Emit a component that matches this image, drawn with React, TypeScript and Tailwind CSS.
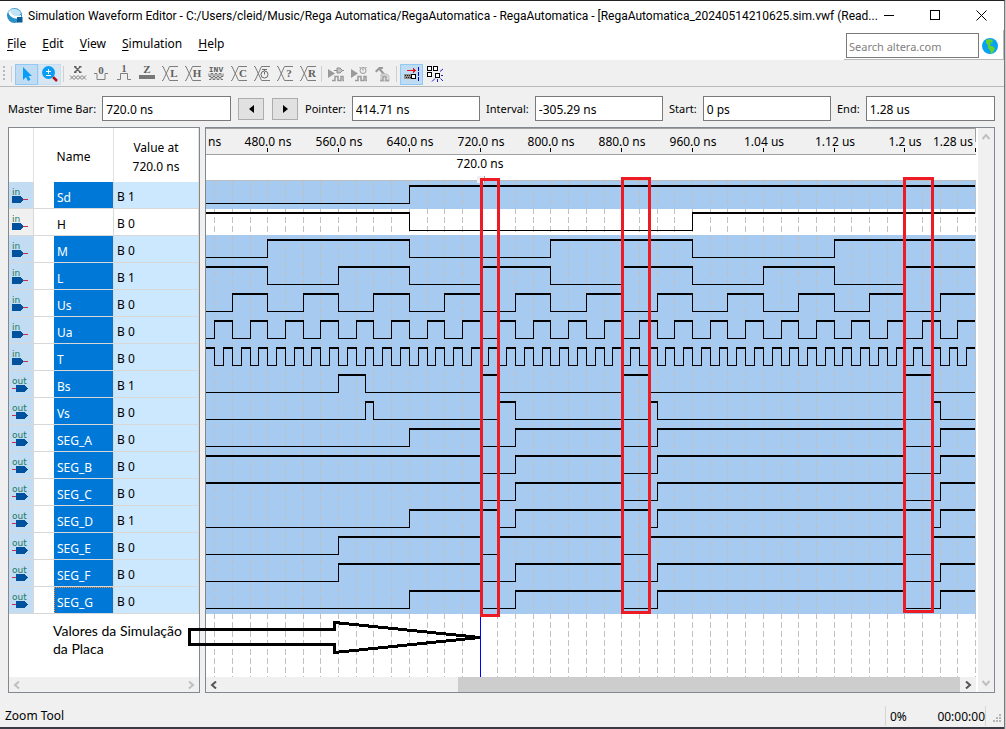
import type { ReactNode } from "react";

type Signal = {
  name: string;
  kind: "in" | "out";
  value: string;
  selected: boolean;
  start: 0 | 1;
  edges: number[];
};

const T_START = 411;
const T_END = 1280;

function clock(step: number): number[] {
  const edges: number[] = [];
  for (let t = Math.ceil(T_START / step) * step; t < T_END; t += step) edges.push(t);
  return edges;
}

const COMMON = [720, 760, 880, 920, 1200, 1240];

const SIGNALS: Signal[] = [
  { name: "Sd", kind: "in", value: "B 1", selected: true, start: 0, edges: [640] },
  { name: "H", kind: "in", value: "B 0", selected: false, start: 1, edges: [640, 960] },
  { name: "M", kind: "in", value: "B 0", selected: true, start: 0, edges: [480, 640, 800, 960, 1120] },
  { name: "L", kind: "in", value: "B 1", selected: true, start: 1, edges: [480, 560, 640, 720, 800, 880, 960, 1040, 1120, 1200] },
  { name: "Us", kind: "in", value: "B 0", selected: true, start: 0, edges: clock(40) },
  { name: "Ua", kind: "in", value: "B 0", selected: true, start: 0, edges: clock(20) },
  { name: "T", kind: "in", value: "B 0", selected: true, start: 1, edges: clock(10) },
  { name: "Bs", kind: "out", value: "B 1", selected: true, start: 0, edges: [560, 590, 720, 740, 880, 910, 1200, 1230] },
  { name: "Vs", kind: "out", value: "B 0", selected: true, start: 0, edges: [590, 600, 740, 760, 910, 920, 1230, 1240] },
  { name: "SEG_A", kind: "out", value: "B 0", selected: true, start: 0, edges: [640, ...COMMON] },
  { name: "SEG_B", kind: "out", value: "B 0", selected: true, start: 1, edges: COMMON },
  { name: "SEG_C", kind: "out", value: "B 0", selected: true, start: 1, edges: COMMON },
  { name: "SEG_D", kind: "out", value: "B 1", selected: true, start: 0, edges: [640, 740, 760, 910, 920, 1230, 1240] },
  { name: "SEG_E", kind: "out", value: "B 0", selected: true, start: 0, edges: [560, 720, 740, 880, 910, 1200, 1230] },
  { name: "SEG_F", kind: "out", value: "B 0", selected: true, start: 0, edges: [560, ...COMMON] },
  { name: "SEG_G", kind: "out", value: "B 0", selected: true, start: 0, edges: [640, ...COMMON] },
];

const ROW = 27;
const ROWS_TOP = 53;
const xOf = (t: number) => Math.round(t * 0.885 - 363.6);

function Wave({ signal, index }: { signal: Signal; index: number }) {
  const high = ROWS_TOP + 4 + index * ROW;
  const low = high + 18;
  const points = [...signal.edges.map(xOf), 769];
  const parts: ReactNode[] = [];
  let level = signal.start;
  let x = 0;
  points.forEach((next, i) => {
    parts.push(
      level ? (
        <rect key={`h${i}`} x={x} y={high} width={next - x} height={2} />
      ) : (
        <rect key={`l${i}`} x={x} y={low} width={next - x} height={1} />
      ),
    );
    if (i < points.length - 1) parts.push(<rect key={`v${i}`} x={next} y={high} width={1} height={19} />);
    x = next;
    level = level ? 0 : 1;
  });
  return <g fill="#000">{parts}</g>;
}

const TICKS: [number, string][] = [
  [480, "480.0 ns"],
  [560, "560.0 ns"],
  [640, "640.0 ns"],
  [720, "720.0 ns"],
  [800, "800.0 ns"],
  [880, "880.0 ns"],
  [960, "960.0 ns"],
  [1040, "1.04 us"],
  [1120, "1.12 us"],
  [1200, "1.2 us"],
];

function Chart() {
  return (
    <svg width="770" height="549" viewBox="0 0 770 549" className="block shrink-0" shapeRendering="crispEdges" role="img" aria-label="Waveforms">
      <rect width="770" height="549" fill="#fff" />
      <rect width="770" height="26" fill="#f0f0f0" />
      <rect width="770" height="1" fill="#a0a0a0" />
      <rect y="26" width="770" height="1" fill="#a0a0a0" />
      <rect x="769" width="1" height="14" fill="#a0a0a0" />
      <rect y="52" width="770" height="1" fill="#bdbdbd" />
      <rect y="53" width="770" height="28" fill="#a6caf0" />
      <rect y="107" width="770" height="379" fill="#a6caf0" />
      {clock(20).concat(1280).map((t) => (
        <line key={t} x1={xOf(t) + 0.5} x2={xOf(t) + 0.5} y1="53" y2="549" stroke="#c0c0c0" strokeDasharray="6 3" />
      ))}
      {SIGNALS.map((s, i) => (
        <Wave key={s.name} signal={s} index={i} />
      ))}
      <g className="text-xs" fill="#000" textAnchor="middle">
        <text x="2" y="18" textAnchor="start">ns</text>
        {TICKS.map(([t, label]) => (
          <g key={t}>
            <text x={xOf(t) + 1} y="18">{label}</text>
            <rect x={xOf(t)} y="20" width="1" height="4" />
          </g>
        ))}
        <text x="767" y="18" textAnchor="end">1.28 us</text>
        <rect x="769" y="20" width="1" height="4" />
        <text x="274" y="40">720.0 ns</text>
      </g>
      <rect x="271" y="48" width="8" height="7" fill="#f0f0f0" />
      <rect x="278" y="48" width="1" height="7" fill="#a0a0a0" />
      <rect x="274" y="55" width="1" height="494" fill="#00f" />
    </svg>
  );
}

function PinIcon({ kind }: { kind: "in" | "out" }) {
  return (
    <svg width="24" height="26" viewBox="0 0 24 26" className="block" aria-label={kind}>
      <text x="3" y="13" fontSize="9" fontFamily="DejaVu Sans" fill="#1c7a62">{kind}</text>
      {kind === "in" ? (
        <g shapeRendering="crispEdges">
          <path d="M3 14h9l3 3.5-3 3.5H3z" fill="#00529f" />
          <rect x="14" y="17" width="5" height="1" fill="#c2304f" />
        </g>
      ) : (
        <g shapeRendering="crispEdges">
          <path d="M7 14h9l3 3.5-3 3.5H7z" fill="#00529f" />
          <rect x="3" y="17" width="4" height="1" fill="#c2304f" />
        </g>
      )}
    </svg>
  );
}

function Tool({ label, tone = "plain", children }: { label: string; tone?: "plain" | "on" | "hover"; children: ReactNode }) {
  const look = {
    plain: "border-transparent",
    on: "border-[#90c8f6] bg-[#c0dcf3]",
    hover: "border-[#c5dff5] bg-[#d8e6f2]",
  }[tone];
  return (
    <button type="button" aria-label={label} className={`flex h-[21px] w-[23px] items-center justify-center border ${look}`}>
      <svg width="16" height="16" viewBox="0 0 16 16" className="block shrink-0 overflow-visible">{children}</svg>
    </button>
  );
}

function Glyph({ x = 8, y, size, children }: { x?: number; y: number; size: number; children: string }) {
  return (
    <text x={x} y={y} fontSize={size} fontWeight="700" fontFamily="Liberation Serif" textAnchor="middle" fill="#5f5f5f">
      {children}
    </text>
  );
}

function Cross({ letter }: { letter?: string }) {
  return (
    <>
      <path d="M0 .5h1L7.500 14.500H16M0 14.500h1L7.500 .5H16" fill="none" stroke="#7d7d7d" />
      {letter && <Glyph x={12} y={11} size={11}>{letter}</Glyph>}
    </>
  );
}

function Play() {
  return (
    <>
      <path d="M0 3l7 4.500L0 12z" fill="#9a9a9a" />
      <path d="M4 14.500h3v-4h3v4h3v-4h2v4h1" fill="none" stroke="#9a9a9a" strokeWidth="1.500" />
    </>
  );
}

function Separator() {
  return <span className="mx-[2px] h-4 w-px bg-[#cfcfcf]" />;
}

function Toolbar() {
  return (
    <div role="toolbar" aria-label="Waveform tools" className="flex h-[25px] items-center border-b border-[#b9b9b9] bg-[#f0f0f0] pl-[3px]">
      <svg width="8" height="18" viewBox="0 0 8 18" className="block" fill="#b8b8b8" aria-hidden="true">
        <path d="M0 1h2v2H0zM0 5h2v2H0zM0 9h2v2H0zM0 13h2v2H0z" />
      </svg>
      <span className="mr-[3px] h-4 w-px bg-[#cfcfcf]" />
      <Tool label="Selection Tool" tone="on">
        <path d="M4 1v13l3-3 2 4 2.500-1.200L9.500 10H13z" fill="#0a9df5" />
      </Tool>
      <Tool label="Zoom Tool" tone="hover">
        <path d="M11 11l4 4" stroke="#b3131b" strokeWidth="2.500" />
        <circle cx="6.500" cy="6.500" r="6.500" fill="#0a9df5" />
        <path d="M4 5.500h5M6.500 3v5M4 9.500h5" stroke="#fff" fill="none" />
      </Tool>
      <Separator />
      <Tool label="Forcing Unknown">
        <path d="M5 1l5 5M10 1L5 6M4 .7h2.500M9 .7h2.500M4 6.300h2.500M9 6.300h2.500" stroke="#5f5f5f" strokeWidth="1.400" fill="none" />
        <path d="M0 9.500l4 4 4-4 4 4 4-4M0 13.500l4-4 4 4 4-4 4 4" stroke="#808080" fill="none" />
      </Tool>
      <Tool label="Forcing Low">
        <Glyph y={8} size={11}>0</Glyph>
        <path d="M1 7.500h3v6h8v-6h3" fill="none" stroke="#808080" />
      </Tool>
      <Tool label="Forcing High">
        <Glyph y={6} size={10}>1</Glyph>
        <path d="M1 13.500h3.500v-6h7v6H15" fill="none" stroke="#808080" />
      </Tool>
      <Tool label="High Impedance">
        <Glyph y={7} size={11}>Z</Glyph>
        <rect y="9" width="16" height="4" fill="#777" />
      </Tool>
      <Tool label="Weak Low"><Cross letter="L" /></Tool>
      <Tool label="Weak High"><Cross letter="H" /></Tool>
      <Tool label="Invert">
        <text x="8" y="6" fontSize="8" fontWeight="700" fontFamily="Liberation Mono" textAnchor="middle" fill="#5f5f5f">INV</text>
        <path d="M1 7.500v3h2v-3h2v3h2v-3h2v3h2v-3h2v3h2v-3M1 13.500h2v-2h2v2h2v-2h2v2h2v-2h2v2h2" fill="none" stroke="#777" />
      </Tool>
      <Tool label="Count Value"><Cross letter="C" /></Tool>
      <Tool label="Overwrite Clock">
        <Cross />
        <circle cx="10.500" cy="8.500" r="3.500" fill="#f0f0f0" stroke="#6b6b6b" />
        <path d="M10.500 8.500V6M8 3.500h5M10.500 3v2" stroke="#6b6b6b" fill="none" />
      </Tool>
      <Tool label="Arbitrary Value"><Cross letter="?" /></Tool>
      <Tool label="Random Values"><Cross letter="R" /></Tool>
      <Separator />
      <Tool label="Run Functional Simulation">
        <Play />
        <path d="M6 4.500h3M14 4.500h2M9 2h3l2.500 2.500L12 7H9z" fill="#c4c4c4" stroke="#8a8a8a" />
      </Tool>
      <Tool label="Run Timing Simulation">
        <Play />
        <circle cx="12" cy="4.500" r="3" fill="#eee" stroke="#9a9a9a" />
        <path d="M12 4.500V2.500M8.500 1l1 1M15.500 1l-1 1" stroke="#8a8a8a" />
      </Tool>
      <Tool label="Generate Testbench">
        <path d="M1 5l4-4h4v2H7l5 6-1.500 1.500L5 4 2.500 6.500z" fill="#9a9a9a" />
        <path d="M7 8h6l2 2v5H7z" fill="#ddd" stroke="#c0c0c0" />
        <path d="M6 14.500h3v-4h3v4h3" fill="none" stroke="#a2a2a2" strokeWidth="1.500" />
      </Tool>
      <span className="mx-[3px] h-4 w-px bg-[#cfcfcf]" />
      <Tool label="Snap to Grid" tone="on">
        <g shapeRendering="crispEdges">
          <path d="M3 4h6V2l3 2.500L9 7V5H3z" fill="#e8141c" />
          <rect x="0" y="8" width="8" height="5" fill="#8f8f8f" />
          <path d="M1 9h1v1H1zM3 9h1v1H3zM5 9h1v1H5zM2 11h1v1H2zM4 11h1v1H4zM6 11h1v1H6z" fill="#222" />
          <rect x="7.500" y="8.500" width="4" height="4" fill="#fff" stroke="#000" />
          <path d="M14.500 1v14" stroke="#00d" strokeDasharray="4 1" />
        </g>
      </Tool>
      <Tool label="Snap to Transition">
        <g shapeRendering="crispEdges" fill="#fff" stroke="#000">
          <rect x=".5" y=".5" width="4" height="4" />
          <rect x="6.500" y=".5" width="4" height="4" />
          <rect x=".5" y="6.500" width="4" height="4" />
          <rect x="8.500" y="7.500" width="4" height="4" />
        </g>
        <path d="M13 5.500l3-2.500M14 9.500h2M13.500 12.500L16 15M10.500 13v3M8 12.500l-3 3" stroke="#2020c8" />
      </Tool>
    </div>
  );
}

function Field({ id, label, value }: { id: string; label: string; value: string }) {
  return (
    <div className="flex min-w-0 flex-1 items-center gap-[6px]">
      <label htmlFor={id} className="shrink-0 pt-[2px] text-[11px]">{label}</label>
      <input id={id} defaultValue={value} className="h-[25px] w-full min-w-0 flex-1 border border-[#7a7a7a] bg-white px-[3px] pt-[2px] outline-none" />
    </div>
  );
}

function TimeBar() {
  return (
    <form className="flex h-10 items-center pt-[3px] pr-[9px] pl-2">
      <div className="flex min-w-0 flex-[223] items-center">
        <Field id="master" label="Master Time Bar:" value="720.0 ns" />
      </div>
      <button type="button" aria-label="Previous transition" className="ml-[7px] flex h-[22px] w-[26px] items-center justify-center border border-[#adadad] bg-[#e1e1e1]">
        <svg width="5" height="8" viewBox="0 0 5 8"><path d="M5 0v8L0 4z" /></svg>
      </button>
      <button type="button" aria-label="Next transition" className="ml-2 flex h-[22px] w-[26px] items-center justify-center border border-[#adadad] bg-[#e1e1e1]">
        <svg width="5" height="8" viewBox="0 0 5 8"><path d="M0 0v8l5-4z" /></svg>
      </button>
      <div className="ml-[7px] flex min-w-0 flex-[175]"><Field id="pointer" label="Pointer:" value="414.71 ns" /></div>
      <div className="ml-[6px] flex min-w-0 flex-[177]"><Field id="interval" label="Interval:" value="-305.29 ns" /></div>
      <div className="ml-[6px] flex min-w-0 flex-[162]"><Field id="start" label="Start:" value="0 ps" /></div>
      <div className="ml-[6px] flex min-w-0 flex-[158]"><Field id="end" label="End:" value="1.28 us" /></div>
    </form>
  );
}

function Chevron({ d, tone }: { d: string; tone: string }) {
  return (
    <svg width="8" height="8" viewBox="0 0 8 8" className="block" aria-hidden="true">
      <path d={d} fill="none" stroke={tone} strokeWidth="2" />
    </svg>
  );
}

const LEFT = "M6 .5L2 4l4 3.500";
const RIGHT = "M2 .5L6 4 2 7.500";
const UP = "M.5 6L4 2l3.500 4";
const DOWN = "M.5 2L4 6l3.500-4";

function SignalPanel() {
  return (
    <section className="flex w-48 shrink-0 flex-col border border-[#828790] bg-white">
      <table className="w-full table-fixed border-separate border-spacing-0">
        <colgroup>
          <col className="w-[25px]" />
          <col className="w-[20px]" />
          <col className="w-[60px]" />
          <col className="w-[85px]" />
        </colgroup>
        <thead>
          <tr className="h-[54px]">
            <th aria-label="Type" className="border-r border-[#e2e2e2] p-0" />
            <th colSpan={2} className="border-r border-[#e2e2e2] p-0 pt-1 font-normal">Name</th>
            <th className="border-r border-[#e2e2e2] p-0 pt-1 leading-[19px] font-normal">Value at<br />720.0 ns</th>
          </tr>
        </thead>
        <tbody>
          {SIGNALS.map((s) => (
            <tr key={s.name} className="h-[27px]">
              <td className={`border-r border-b border-[#d8d8d8] p-0 ${s.selected ? "bg-[#c2dcf3]" : "bg-[#f0f0f0]"}`}><PinIcon kind={s.kind} /></td>
              <td className="border-b border-[#d8d8d8] p-0" />
              <td className={`border-r border-b border-[#d8d8d8] p-0 ${s.selected ? "bg-[#0078d7] text-white" : ""}`}>
                <div className={`flex h-[26px] items-center border-t border-l border-dotted pt-1 pl-[2px] ${s.name === "SEG_G" ? "border-[#ff8728]" : "border-transparent"}`}>{s.name}</div>
              </td>
              <td className={`border-r border-b border-[#d8d8d8] p-0 pt-1 pl-[3px] ${s.selected ? "bg-[#cce8ff]" : ""}`}>{s.value}</td>
            </tr>
          ))}
        </tbody>
      </table>
      <p className="mt-2 pl-11 font-[Lato] text-sm leading-[18px] whitespace-nowrap">
        Valores da Simulação
        <br />
        da Placa
      </p>
      <div className="mt-auto flex h-[15px] items-center justify-between bg-[#f0f0f0] px-1">
        <Chevron d={LEFT} tone="#bfbfbf" />
        <Chevron d={RIGHT} tone="#bfbfbf" />
      </div>
    </section>
  );
}

function WavePanel() {
  return (
    <section className="flex min-w-0 flex-1 border border-[#828790] bg-white">
      <div className="flex min-w-0 flex-1 flex-col pr-[2px]">
        <div className="flex-1 overflow-hidden"><Chart /></div>
        <div className="flex h-[15px] bg-[#f0f0f0]">
          <div className="flex w-4 items-center justify-center"><Chevron d={LEFT} tone="#555" /></div>
          <div className="flex flex-1"><span className="ml-auto h-full w-[68%] bg-[#cdcdcd]" /></div>
          <div className="flex w-4 items-center justify-center"><Chevron d={RIGHT} tone="#555" /></div>
        </div>
      </div>
      <div className="flex w-4 flex-col items-center justify-between bg-[#f0f0f0] py-[5px]">
        <Chevron d={UP} tone="#bfbfbf" />
        <Chevron d={DOWN} tone="#bfbfbf" />
      </div>
    </section>
  );
}

function Annotations() {
  return (
    <svg width="987" height="566" viewBox="0 0 987 566" fill="none" strokeWidth="3" className="pointer-events-none absolute top-0 left-0" aria-hidden="true">
      <g stroke="#ed1c24" shapeRendering="crispEdges">
        <rect x="473.500" y="52.500" width="17" height="436" />
        <rect x="614.500" y="51.500" width="27" height="434" />
        <rect x="896.500" y="51.500" width="28" height="433" />
      </g>
      <path d="M181.500 502.500h145v-7L472 510.500 326.500 525.500v-8h-145z" stroke="#000" shapeRendering="crispEdges" />
    </svg>
  );
}

const MENUS = ["File", "Edit", "View", "Simulation", "Help"];

export default function App() {
  return (
    <div className="bg-[#c9c9c9] pr-px font-['Noto_Sans',sans-serif] text-xs text-black">
      <div className="flex min-h-screen flex-col border-t border-r border-t-[#222] border-r-[#777] bg-[#f0f0f0]">
        <header className="bg-white">
          <div className="flex h-[29px] items-center pr-[17px] pl-[7px]">
            <svg width="16" height="16" viewBox="0 0 16 16" className="mr-[5px] block shrink-0" aria-hidden="true">
              <circle cx="7.500" cy="7.500" r="7.500" fill="#2b8fc9" />
              <path d="M1 4a7.500 7.500 0 0 1 13 1c-2 5-9 5-13-1z" fill="#bfe3f5" />
              <path d="M3 3c2 5 6 6 11 4v3C8 12 3 9 1.500 5z" fill="#fff" />
              <rect x="10" y="9" width="5.500" height="5.500" fill="#0a5d96" />
            </svg>
            <h1 className="min-w-0 flex-1 overflow-hidden font-[Roboto,sans-serif] whitespace-nowrap">
              Simulation Waveform Editor - C:/Users/cleid/Music/Rega Automatica/RegaAutomatica - RegaAutomatica - [RegaAutomatica_20240514210625.sim.vwf (Read...
            </h1>
            <div className="flex shrink-0 items-center gap-[35px] pl-px">
              <button type="button" aria-label="Minimize"><svg width="11" height="11" viewBox="0 0 11 11" className="block"><path d="M0 5.500h10" stroke="#000" /></svg></button>
              <button type="button" aria-label="Maximize"><svg width="11" height="11" viewBox="0 0 11 11" className="block"><rect x=".5" y=".5" width="9" height="9" fill="none" stroke="#000" /></svg></button>
              <button type="button" aria-label="Close"><svg width="11" height="11" viewBox="0 0 11 11" className="block"><path d="M.5 .5l10 10M10.500 .5l-10 10" stroke="#000" /></svg></button>
            </div>
          </div>
          <div className="flex h-8 items-start justify-between border-b-2 border-[#f0f0f0]">
            <nav aria-label="Main menu" className="flex gap-4 pt-[6px] pl-[7px]">
              {MENUS.map((m) => (
                <button key={m} type="button"><span className="underline underline-offset-2">{m[0]}</span>{m.slice(1)}</button>
              ))}
            </nav>
            <div className="flex h-[30px] items-center gap-[3px] border-r border-b border-[#b9b9b9] pt-[2px] pr-[5px] pl-[2px]">
              <input aria-label="Search altera.com" placeholder="Search altera.com" className="h-[25px] w-[133px] border border-[#7a7a7a] bg-white px-[2px] pt-[2px] text-[11px] placeholder:text-[#7f7f7f] outline-none" />
              <svg width="16" height="16" viewBox="0 0 16 16" className="block" aria-hidden="true">
                <circle cx="8" cy="8" r="8" fill="#08a3f0" />
                <path d="M4 2l4-1 3 1-1 2 1 1-2 1-1 2 2 0 3 2-1 3-3 3-1-4-2-2V7L4 5z" fill="#62d22e" />
                <path d="M8 4l2 1-2 1z" fill="#08a3f0" />
              </svg>
            </div>
          </div>
        </header>
        <Toolbar />
        <TimeBar />
        <main className="relative ml-2 mr-[9px] flex h-[566px] gap-[5px]">
          <SignalPanel />
          <WavePanel />
          <Annotations />
        </main>
        <footer className="flex flex-1 items-center border-b-2 border-[#3a3a44] pt-3 pl-[5px]">
          <span className="flex-1">Zoom Tool</span>
          <span className="flex h-5 w-[101px] items-center justify-between border-x border-[#d5d5d5] pt-px pl-1">
            <span>0%</span>
            <span>00:00:00</span>
          </span>
          <svg width="18" height="18" viewBox="0 0 18 18" className="block" fill="#b5b5b5" aria-hidden="true">
            <path d="M13 7h2v2h-2zM10 10h2v2h-2zM13 10h2v2h-2zM7 13h2v2H7zM10 13h2v2h-2zM13 13h2v2h-2z" />
          </svg>
        </footer>
      </div>
    </div>
  );
}
